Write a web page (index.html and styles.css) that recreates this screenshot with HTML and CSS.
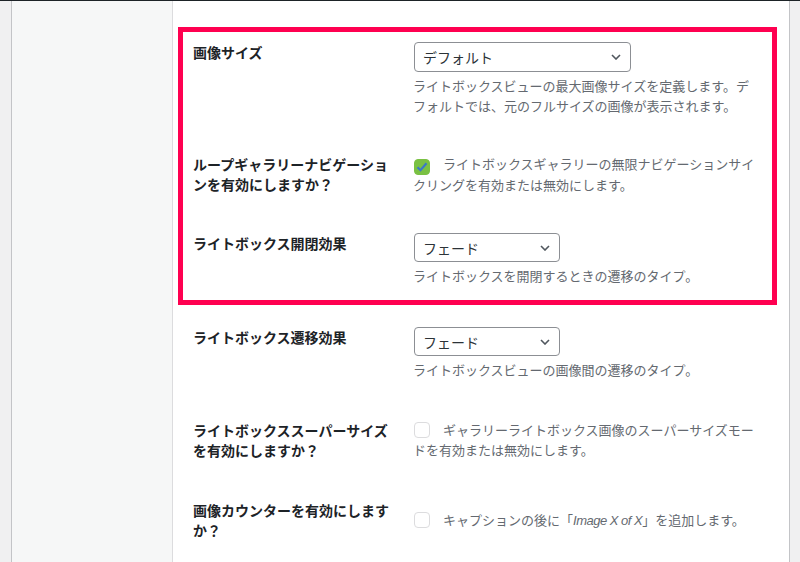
FILE: index.html
```html
<!DOCTYPE html>
<html lang="ja">
<head>
    <meta charset="UTF-8">
    <meta name="viewport" content="width=device-width, initial-scale=1.0">
    <title>ライトボックス設定</title>
    <link rel="stylesheet" href="styles.css">
</head>
<body>
    <div class="page">
        <div class="edge-left"></div>
        <div class="side-panel"></div>

        <main class="content">
            <!-- 強調表示された設定 -->
            <div class="highlight">
                <div class="row">
                    <div class="row-label">画像サイズ</div>
                    <div class="row-field">
                        <div class="select-wrap select-wide">
                            <select>
                                <option>デフォルト</option>
                            </select>
                            <svg class="chevron" width="10" height="6" viewBox="0 0 10 6"><path d="M1 1l4 4 4-4" fill="none" stroke="#50575e" stroke-width="1.6"/></svg>
                        </div>
                        <p class="desc">ライトボックスビューの最大画像サイズを定義します。デフォルトでは、元のフルサイズの画像が表示されます。</p>
                    </div>
                </div>

                <div class="row">
                    <div class="row-label">ループギャラリーナビゲーションを有効にしますか？</div>
                    <div class="row-field">
                        <label class="desc check-line">
                            <span class="checkbox checked">
                                <svg width="12" height="10" viewBox="0 0 12 10"><path d="M1.5 5.2l3 3 6-7" fill="none" stroke="#3b78c8" stroke-width="2.2"/></svg>
                            </span>ライトボックスギャラリーの無限ナビゲーションサイクリングを有効または無効にします。
                        </label>
                    </div>
                </div>

                <div class="row">
                    <div class="row-label">ライトボックス開閉効果</div>
                    <div class="row-field">
                        <div class="select-wrap">
                            <select>
                                <option>フェード</option>
                            </select>
                            <svg class="chevron" width="10" height="6" viewBox="0 0 10 6"><path d="M1 1l4 4 4-4" fill="none" stroke="#50575e" stroke-width="1.6"/></svg>
                        </div>
                        <p class="desc">ライトボックスを開閉するときの遷移のタイプ。</p>
                    </div>
                </div>
            </div>

            <div class="row">
                <div class="row-label">ライトボックス遷移効果</div>
                <div class="row-field">
                    <div class="select-wrap">
                        <select>
                            <option>フェード</option>
                        </select>
                        <svg class="chevron" width="10" height="6" viewBox="0 0 10 6"><path d="M1 1l4 4 4-4" fill="none" stroke="#50575e" stroke-width="1.6"/></svg>
                    </div>
                    <p class="desc">ライトボックスビューの画像間の遷移のタイプ。</p>
                </div>
            </div>

            <div class="row">
                <div class="row-label">ライトボックススーパーサイズを有効にしますか？</div>
                <div class="row-field">
                    <label class="desc check-line">
                        <span class="checkbox"></span>ギャラリーライトボックス画像のスーパーサイズモードを有効または無効にします。
                    </label>
                </div>
            </div>

            <div class="row row-middle">
                <div class="row-label">画像カウンターを有効にしますか？</div>
                <div class="row-field">
                    <label class="desc check-line">
                        <span class="checkbox"></span>キャプションの後に「<i>Image X of X</i>」を追加します。
                    </label>
                </div>
            </div>
        </main>

        <div class="edge-right"></div>
    </div>
</body>
</html>
```

FILE: styles.css
```css
body {
    margin: 0;
    font-family: "Noto Sans CJK JP", "Noto Sans", sans-serif;
    background-color: #f0f0f1;
    border-top: 1px solid #1d2327;
    overflow: hidden;
}

.page {
    display: flex;
    height: 561px;
}

.edge-left {
    width: 11px;
    background-color: #f0f0f1;
    border-right: 1px solid #c3c4c7;
}

.side-panel {
    width: 160px;
    background-color: #f6f7f7;
    border-right: 1px solid #dcdcde;
}

.content {
    width: 589px;
    background: #fff;
    padding: 26px 17px 0 10px;
    border-right: 1px solid #c3c4c7;
    display: flex;
    flex-direction: column;
    align-items: flex-start;
}

.edge-right {
    flex: 1;
    background-color: #f0f0f1;
}

.highlight {
    margin: 0 0 12px -5px;
    border: 5px solid #ff0050;
    width: 589px;
}

.row {
    display: grid;
    grid-template-columns: 200px 347px;
    column-gap: 20px;
    padding: 10px 0 13px 10px;
}

.highlight .row + .row {
    margin-top: 15px;
}

.content > .row + .row {
    margin-top: 17px;
}

.highlight .row:last-child {
    padding-bottom: 14px;
}

.row-middle {
    align-items: center;
}

.row-label {
    font-size: 14px;
    font-weight: 700;
    line-height: 20px;
    color: #1d2327;
}

.row-field {
    min-width: 0;
}

.desc {
    margin: 4px 0 0;
    font-size: 13px;
    line-height: 20px;
    color: #646970;
}

.check-line {
    display: block;
    margin-top: 0;
}

.check-line i {
    font-family: "Liberation Sans", sans-serif;
    letter-spacing: -0.5px;
}

.checkbox {
    display: inline-flex;
    align-items: center;
    justify-content: center;
    width: 16px;
    height: 16px;
    box-sizing: border-box;
    border: 1px solid #dcdcde;
    border-radius: 4px;
    background: #fff;
    vertical-align: -3px;
    margin: 0 13px 0 1px;
}

.checkbox.checked {
    background: #7ac143;
    border-color: #7ac143;
}

.select-wrap {
    position: relative;
    width: 146px;
    height: 29px;
    margin-left: 1px;
}

.select-wide {
    width: 217px;
    height: 30px;
}

.select-wrap select {
    appearance: none;
    -webkit-appearance: none;
    width: 100%;
    height: 100%;
    margin: 0;
    padding: 0 24px 0 8px;
    border: 1px solid #8c8f94;
    border-radius: 4px;
    background: #fff;
    font-family: "Noto Sans CJK JP", "Noto Sans", sans-serif;
    font-size: 14px;
    font-weight: 400;
    color: #2c3338;
}

.chevron {
    position: absolute;
    right: 10px;
    top: 50%;
    margin-top: -3px;
    pointer-events: none;
}
```
